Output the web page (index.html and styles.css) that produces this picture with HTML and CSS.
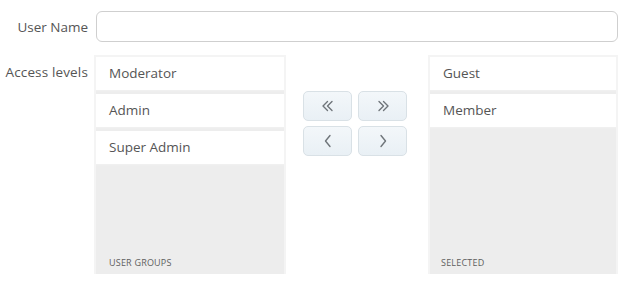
FILE: index.html
```html
<!DOCTYPE html>
<html lang="en">
<head>
    <meta charset="UTF-8">
    <meta name="viewport" content="width=device-width, initial-scale=1.0">
    <title>Access levels</title>
    <link rel="stylesheet" href="styles.css">
</head>
<body>
    <div class="form">
        <div class="row name-row">
            <label class="field-label" for="user_name">User Name</label>
            <input class="text-input" type="text" id="user_name" name="user_name">
        </div>

        <div class="row levels-row">
            <span class="field-label levels-label">Access levels</span>

            <div class="list-box left-box">
                <div class="item">Moderator</div>
                <div class="item">Admin</div>
                <div class="item">Super Admin</div>
                <div class="box-title">User groups</div>
            </div>

            <div class="mover">
                <div class="mover-grid">
                    <button class="move-btn" title="Remove all">
                        <svg width="16" height="12" viewBox="0 0 16 12"><polyline points="7.5,1.5 3,6 7.5,10.5" /><polyline points="12,1.5 7.5,6 12,10.5" /></svg>
                    </button>
                    <button class="move-btn" title="Add all">
                        <svg width="16" height="12" viewBox="0 0 16 12"><polyline points="4,1.5 8.5,6 4,10.5" /><polyline points="8.5,1.5 13,6 8.5,10.5" /></svg>
                    </button>
                    <button class="move-btn" title="Remove">
                        <svg width="10" height="14" viewBox="0 0 10 14"><polyline points="7,1.5 2.5,7 7,12.5" /></svg>
                    </button>
                    <button class="move-btn" title="Add">
                        <svg width="10" height="14" viewBox="0 0 10 14"><polyline points="3,1.5 7.5,7 3,12.5" /></svg>
                    </button>
                </div>
            </div>

            <div class="list-box right-box">
                <div class="item">Guest</div>
                <div class="item">Member</div>
                <div class="box-title">Selected</div>
            </div>
        </div>
    </div>
</body>
</html>
```

FILE: styles.css
```css
body{
    margin: 0;
    background-color: #ffffff;
    font-family: "Open Sans", "Noto Sans", sans-serif;
    font-size: 13.5px;
    color: #555555;
}

.form{
    padding: 11px 8px 0 0;
}

.row{
    display: flex;
}

.field-label{
    width: 88px;
    flex-shrink: 0;
    text-align: right;
    color: #555555;
}

.name-row{
    align-items: center;
}

.text-input{
    flex: 1;
    margin-left: 8px;
    height: 31px;
    box-sizing: border-box;
    border: 1px solid #cfcfcf;
    border-radius: 6px;
    padding: 4px 10px;
    font-family: inherit;
    font-size: 13.5px;
}

.levels-row{
    margin-top: 13px;
    height: 219px;
}

.levels-label{
    padding-top: 8px;
    letter-spacing: 0.15px;
}

.list-box{
    position: relative;
    display: flex;
    flex-direction: column;
    gap: 4px;
    box-sizing: border-box;
    background-color: #ededed;
    border: 2px solid #f4f4f4;
    border-bottom: none;
}

.left-box{
    width: 192px;
    margin-left: 6px;
}

.right-box{
    flex: 1;
}

.item{
    height: 33px;
    line-height: 33px;
    padding-left: 13px;
    background-color: #ffffff;
    color: #555555;
    box-shadow: 0 1px 1px #f0f0f0;
}

.box-title{
    position: absolute;
    left: 13px;
    bottom: 5px;
    font-size: 9px;
    text-transform: uppercase;
    letter-spacing: 0.2px;
    color: #5e5e5e;
}

.right-box .box-title{
    left: 11px;
}

.mover{
    width: 142px;
    flex-shrink: 0;
    display: flex;
    justify-content: center;
    padding-top: 36px;
}

.mover-grid{
    display: grid;
    grid-template-columns: 49px 49px;
    grid-auto-rows: 30px;
    column-gap: 6px;
    row-gap: 5px;
    margin-left: -4px;
}

.move-btn{
    display: flex;
    align-items: center;
    justify-content: center;
    padding: 0;
    border: 1px solid #d9e1e6;
    border-radius: 5px;
    background: linear-gradient(#f3f7fa, #e9f0f5);
}

.move-btn svg{
    fill: none;
    stroke: #6f757a;
    stroke-width: 1.4;
    stroke-linecap: round;
    stroke-linejoin: round;
}
```
